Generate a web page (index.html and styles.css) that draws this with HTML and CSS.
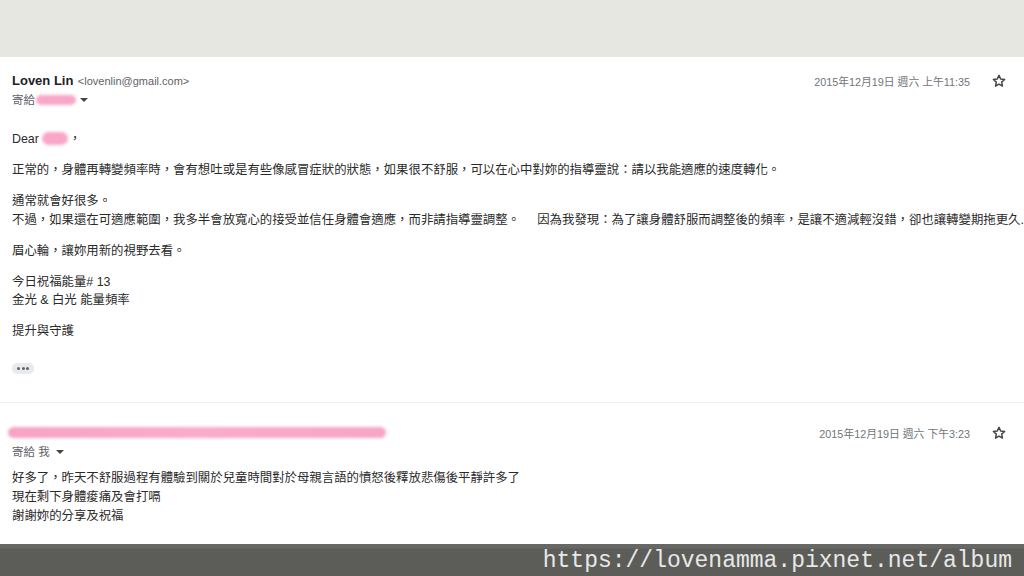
FILE: index.html
```html
<!DOCTYPE html>
<html lang="zh-Hant">
<head>
<meta charset="utf-8">
<title>Mail</title>
<link rel="stylesheet" href="styles.css">
</head>
<body>
<div class="page">
  <div class="topband"></div>
  <div class="mail">
    <section class="msg msg1">
      <div class="head">
        <div class="who">
          <div class="sender"><span class="name">Loven Lin</span> <span class="addr">&lt;lovenlin@gmail.com&gt;</span></div>
          <div class="to">寄給<span class="blur blur-to"></span><span class="caret"></span></div>
        </div>
        <div class="meta">
          <span class="date">2015年12月19日 週六 上午11:35</span>
          <svg class="star" viewBox="0 0 24 24" width="16" height="16"><path d="M12 3.5l2.47 5.6 6.03.6-4.55 4.03 1.33 5.97L12 16.6l-5.28 3.1 1.33-5.97L3.5 9.7l6.03-.6z" fill="none" stroke="#444" stroke-width="2.2" stroke-linejoin="round"/></svg>
        </div>
      </div>
      <div class="body">
        <p class="dear">Dear<span class="blur blur-dear"></span>，</p>
        <p>正常的，身體再轉變頻率時，會有想吐或是有些像感冒症狀的狀態，如果很不舒服，可以在心中對妳的指導靈說：請以我能適應的速度轉化。</p>
        <p>通常就會好很多。<br>不過，如果還在可適應範圍，我多半會放寬心的接受並信任身體會適應，而非請指導靈調整。&nbsp;&nbsp;&nbsp;&nbsp;&nbsp;因為我發現：為了讓身體舒服而調整後的頻率，是讓不適減輕沒錯，卻也讓轉變期拖更久.</p>
        <p>眉心輪，讓妳用新的視野去看。</p>
        <p>今日祝福能量# 13<br>金光 &amp; 白光 能量頻率</p>
        <p>提升與守護</p>
        <div class="more"><span></span><span></span><span></span></div>
      </div>
    </section>
    <section class="msg msg2">
      <div class="head">
        <div class="who">
          <div class="sender"><span class="blur blur-from"></span></div>
          <div class="to">寄給 我<span class="caret"></span></div>
        </div>
        <div class="meta">
          <span class="date">2015年12月19日 週六 下午3:23</span>
          <svg class="star" viewBox="0 0 24 24" width="16" height="16"><path d="M12 3.5l2.47 5.6 6.03.6-4.55 4.03 1.33 5.970L12 16.6l-5.28 3.1 1.33-5.97L3.5 9.7l6.03-.6z" fill="none" stroke="#444" stroke-width="2.2" stroke-linejoin="round"/></svg>
        </div>
      </div>
      <div class="body">
        <p>好多了，昨天不舒服過程有體驗到關於兒童時間對於母親言語的憤怒後釋放悲傷後平靜許多了<br>現在剩下身體痠痛及會打嗝<br>謝謝妳的分享及祝福</p>
      </div>
    </section>
  </div>
  <div class="footer"><span class="url">https://lovenamma.pixnet.net/album</span></div>
</div>
</body>
</html>
```

FILE: styles.css
```css
html, body {
  margin: 0;
  padding: 0;
  background: #fff;
}
.page {
  width: 1024px;
  height: 576px;
  overflow: hidden;
  display: flex;
  flex-direction: column;
  font-family: "Liberation Sans", Arial, "Noto Sans CJK TC", sans-serif;
  color: #222;
}
.topband {
  height: 57px;
  flex: none;
  background: #e7e7e1;
}
.mail {
  flex: 1;
  background: #fff;
  overflow: hidden;
}
.msg {
  padding: 0 0 0 12px;
}
.msg1 {
  padding-top: 14px;
  padding-bottom: 28px;
  border-bottom: 1px solid #f1f1f1;
}
.msg2 {
  padding-top: 20px;
}
.head {
  display: flex;
  justify-content: space-between;
  align-items: flex-start;
}
.sender {
  height: 18px;
  line-height: 18px;
  white-space: nowrap;
}
.name {
  font-weight: bold;
  font-size: 13px;
  color: #202124;
}
.addr {
  font-size: 11px;
  color: #5f6368;
}
.to {
  margin-top: 2px;
  font-size: 11.5px;
  line-height: 18px;
  color: #5f6368;
  display: flex;
  align-items: center;
}
.caret {
  display: inline-block;
  width: 0;
  height: 0;
  border-left: 4px solid transparent;
  border-right: 4px solid transparent;
  border-top: 4px solid #444;
  margin-left: 4px;
}
.msg2 .to .caret {
  margin-left: 6px;
}
.meta {
  display: flex;
  align-items: center;
  gap: 21px;
  padding-right: 17px;
  height: 20px;
}
.date {
  font-size: 10.8px;
  color: #70757a;
  white-space: nowrap;
}
.star {
  display: block;
}
.blur {
  display: inline-block;
  background: #f9a7c9;
  border-radius: 8px;
  filter: blur(1.5px);
}
.blur-to {
  width: 40px;
  height: 10px;
  margin-left: 1px;
}
.blur-dear {
  width: 26px;
  height: 13px;
  margin: 0 1px 0 3px;
  vertical-align: -2px;
}
.blur-from {
  width: 378px;
  height: 11px;
  margin-left: -4px;
  vertical-align: middle;
  background: linear-gradient(90deg, #f7a3c6, #f9abca 50%, #f7a5c7);
}
.body {
  margin-top: 21px;
  font-size: 12.4px;
  line-height: 18.5px;
  color: #2a2a2a;
  white-space: nowrap;
}
.msg2 .body {
  margin-top: 8px;
  line-height: 19px;
}
.body p {
  margin: 0 0 12.5px 0;
}
.more {
  margin-top: 22px;
  width: 22px;
  height: 11px;
  border-radius: 5px;
  background: #e8eaed;
  display: flex;
  align-items: center;
  justify-content: center;
  gap: 1.5px;
}
.more span {
  width: 3px;
  height: 3px;
  border-radius: 50%;
  background: #5f6368;
}
.footer {
  height: 32px;
  flex: none;
  background: linear-gradient(#676866 0, #676866 4px, #5c5d59 5px, #5c5d59 100%);
  display: flex;
  align-items: center;
  justify-content: flex-end;
  padding-right: 12px;
}
.url {
  font-family: "Liberation Mono", "Courier New", monospace;
  font-size: 23px;
  color: #e8e8e8;
  white-space: nowrap;
  padding-top: 2px;
}
```
